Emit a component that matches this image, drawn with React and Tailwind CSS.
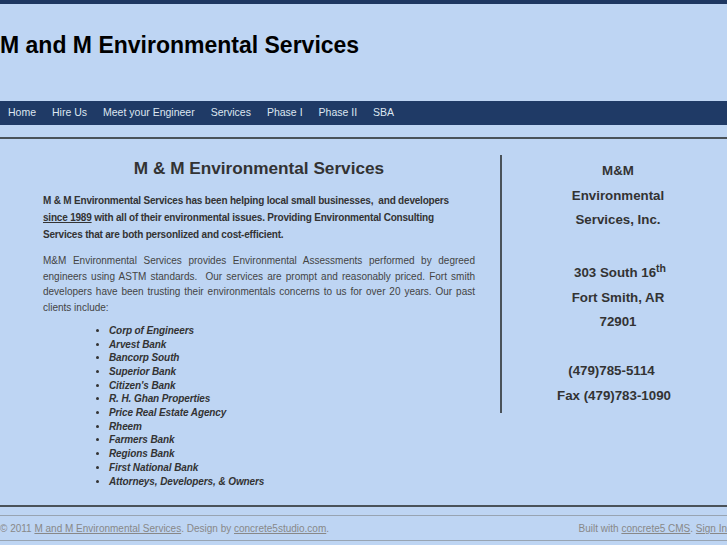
import React from "react";

const clients = [
  "Corp of Engineers",
  "Arvest Bank",
  "Bancorp South",
  "Superior Bank",
  "Citizen's Bank",
  "R. H. Ghan Properties",
  "Price Real Estate Agency",
  "Rheem",
  "Farmers Bank",
  "Regions Bank",
  "First National Bank",
  "Attorneys, Developers, & Owners",
];

const nav = ["Home", "Hire Us", "Meet your Engineer", "Services", "Phase I", "Phase II", "SBA"];

export default function App() {
  return (
    <div
      className="w-[727px] h-[545px] overflow-hidden bg-[#bed5f3] text-[#333]"
      style={{ fontFamily: '"Liberation Sans", Arial, sans-serif' }}
    >
      <div className="h-[4px] bg-[#1e3761]" />
      <div className="h-[97px] pt-[28px]">
        <h1 className="text-[23px] leading-[26px] font-bold text-black">M and M Environmental Services</h1>
      </div>
      <div className="h-[24px] bg-[#1f3a66] flex items-center">
        {nav.map((n) => (
          <span key={n} className="px-[8px] text-[10.5px] text-[#dde6f1]">{n}</span>
        ))}
      </div>
      <div className="h-[12px]" />
      <div className="h-[2px] bg-[#4a5259]" />
      <div className="flex mt-[16px]">
        <div className="w-[500px] pl-[43px] pr-[25px]">
          <h2 className="text-center text-[17.2px] leading-[24px] font-bold text-[#333] mt-[1px]">
            M &amp; M Environmental Services
          </h2>
          <p className="mt-[12px] text-[10px] leading-[17px] font-bold tracking-[-0.2px] text-[#333]">
            M &amp; M Environmental Services has been helping local small businesses,&nbsp; and developers{" "}
            <span className="underline">since 1989</span> with all of their environmental issues. Providing Environmental Consulting Services that are both personlized and cost-efficient.
          </p>
          <p className="mt-[10px] text-[10px] leading-[15.7px] text-[#444] text-justify">
            M&amp;M Environmental Services provides Environmental Assessments performed by degreed engineers using ASTM standards.&nbsp; Our services are prompt and reasonably priced. Fort smith developers have been trusting their environmentals concerns to us for over 20 years. Our past clients include:
          </p>
          <ul className="mt-[8px] pl-[66px] list-disc text-[10px] leading-[13.7px] font-bold italic tracking-[-0.1px] text-[#333]">
            {clients.map((c) => (
              <li key={c}>{c}</li>
            ))}
          </ul>
        </div>
        <div className="self-start w-[227px] border-l-2 border-[#4a5259] pl-[7px] pt-[4px] pb-[5px] text-center text-[13.3px] leading-[24.5px] font-bold text-[#333]">
          <div>M&amp;M</div>
          <div>Environmental</div>
          <div>Services, Inc.</div>
          <div>&nbsp;</div>
          <div className="pt-[4px] pl-[4px]">
            303 South 16<sup className="text-[10.5px]">th</sup>
          </div>
          <div>Fort Smith, AR</div>
          <div>72901</div>
          <div>&nbsp;</div>
          <div className="pr-[13px]">(479)785-5114</div>
          <div className="pr-[8px]">Fax (479)783-1090</div>
        </div>
      </div>
      <div className="mt-[17px] h-[2px] bg-[#4a5259]" />
      <div className="mt-[8px] border-t border-b border-[#98a4b2] h-[26px] flex items-center justify-between text-[10px] text-[#888]">
        <span>
          © 2011 <span className="underline">M and M Environmental Services</span>. Design by{" "}
          <span className="underline">concrete5studio.com</span>.
        </span>
        <span>
          Built with <span className="underline">concrete5 CMS</span>. <span className="underline">Sign In</span>
        </span>
      </div>
    </div>
  );
}
